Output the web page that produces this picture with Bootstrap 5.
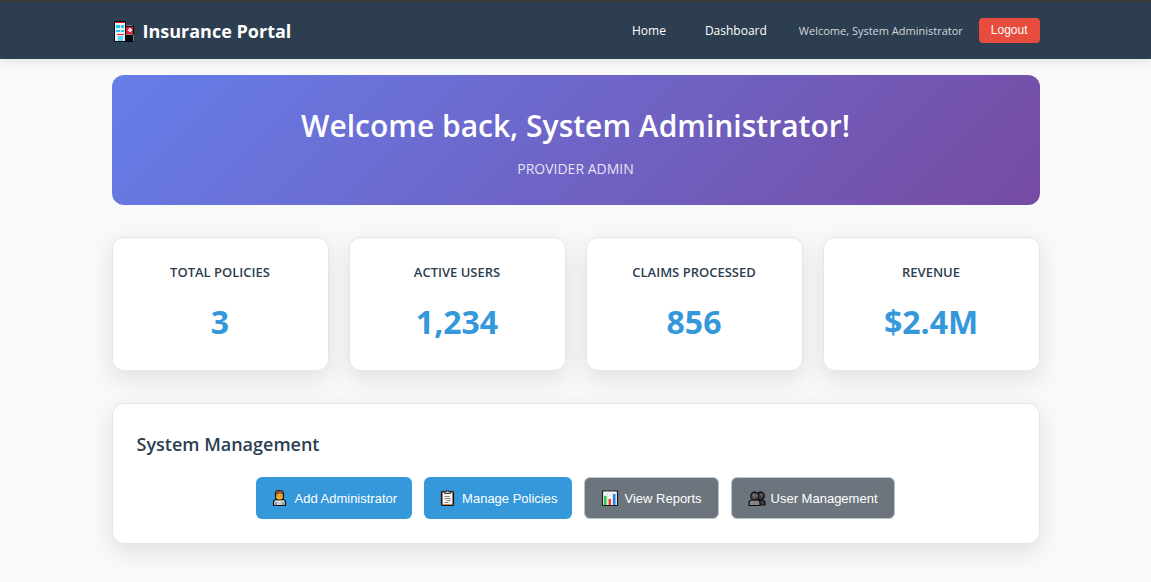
<!DOCTYPE html>
<html lang="en">
<head>
<meta charset="utf-8">
<meta name="viewport" content="width=device-width, initial-scale=1">
<title>Insurance Portal</title>
<link href="https://cdn.jsdelivr.net/npm/bootstrap@5.3.0/dist/css/bootstrap.min.css" rel="stylesheet">
<style>
  body { font-family: "Segoe UI", "Open Sans", sans-serif; background: #f8f9fb; color: #2c3e50; }
  .container { --bs-gutter-x: 2rem; }
  .topbar { background: #2c3e50; border-top: 2px solid #3c3c3c; min-height: 59px; box-shadow: 0 2px 10px rgba(0,0,0,.1); }
  .topbar .navbar-brand { font-size: 18px; line-height: 24px; font-weight: 700; gap: 7px; }
  .topbar .menu .nav-link { font-size: 12px; line-height: 20px; font-weight: 500; color: #fff; padding: 0; }
  .menu { gap: 39px; }
  .greeting { font-size: 11px; line-height: 20px; color: #d5d8dc; }
  .btn { font-family: Arial, "Liberation Sans", sans-serif; font-weight: 500; }
  .btn-logout { --bs-btn-color: #fff; --bs-btn-bg: #e74c3c; --bs-btn-hover-bg: #c0392b; --bs-btn-hover-color: #fff; --bs-btn-border-width: 0; font-size: 12px; line-height: 15px; padding: 5px 12px; border-radius: 4px; }
  .hero { background: linear-gradient(135deg, #667eea 0%, #764ba2 100%); border-radius: 12px; padding: 31px 24px 24px; margin-top: 16px; min-height: 130px; }
  .hero h1 { font-size: 30px; line-height: 40px; font-weight: 600; margin-bottom: 12px; }
  .hero p { font-size: 14px; line-height: 22px; color: rgba(255,255,255,.85); }
  .panel { background: #fff; border: 1px solid #e1e8ed; border-radius: 12px; box-shadow: 0 8px 24px rgba(0,0,0,.1); }
  .stats { --bs-gutter-x: 20px; --bs-gutter-y: 20px; padding-top: 32px; }
  .stat { padding: 24px; min-height: 134px; }
  .stat h2 { font-size: 13px; line-height: 20px; font-weight: 600; margin-bottom: 20px; }
  .stat p { font-size: 32px; line-height: 40px; font-weight: 700; color: #3498db; }
  .manage { margin: 32px 0 38px; padding: 24px; }
  .manage h2 { font-size: 18px; line-height: 32px; font-weight: 600; margin-bottom: 17px; }
  .actions { gap: 12px; }
  .btn-act { display: inline-flex; align-items: center; gap: 5px; font-size: 13px; line-height: 17px; padding: 12px 15px; border-radius: 6px; border: 0; color: #fff; --bs-btn-hover-color: #fff; }
  .btn-blue { --bs-btn-bg: #3498db; --bs-btn-hover-bg: #2980b9; }
  .btn-gray { --bs-btn-bg: #6c757d; --bs-btn-hover-bg: #5c636a; border: 1px solid #bdc3c7; padding: 11px 16px; }
</style>
</head>
<body>
<nav class="navbar navbar-expand navbar-dark topbar py-0">
  <div class="container">
    <a class="navbar-brand d-flex align-items-center p-0 m-0" href="#">
      <svg width="24" height="24" viewBox="0 0 24 24" aria-hidden="true">
        <path d="M2 2h12v4h8v17H2z" fill="#080c10"/>
        <path d="M3 4h10v18H3z" fill="#e6eef2"/>
        <path d="M3 3h10v1H3zM5 15h7v1H5z" fill="#ee1c25"/>
        <path d="M4 6h4v3H4zM9 6h3v3H9zM4 11h4v2H4zM9 11h3v2H9z" fill="#27c4ed"/>
        <path d="M6 17h5v5H6z" fill="#5bd5f5"/>
        <path d="M14 6h7v1h-7z" fill="#686e74"/>
        <path d="M14 8h7v7h-7z" fill="#dc2438"/>
        <path d="M17 9h2v1h1v2h-1v1h-2v-1h-1v-2h1z" fill="#ffd9de"/>
        <path d="M14 15h7v1h-7zM21 16h1v6h-1z" fill="#7d8185"/>
      </svg>
      Insurance Portal
    </a>
    <div class="d-flex align-items-center">
      <div class="navbar-nav menu">
        <a class="nav-link" href="#">Home</a>
        <a class="nav-link" href="#">Dashboard</a>
      </div>
      <span class="greeting ms-4 ps-2">Welcome, System Administrator</span>
      <button type="button" class="btn btn-logout ms-3">Logout</button>
    </div>
  </div>
</nav>

<main class="container">
  <section class="hero text-center text-white">
    <h1>Welcome back, System Administrator!</h1>
    <p class="mb-0">PROVIDER ADMIN</p>
  </section>

  <section class="row row-cols-2 row-cols-md-4 stats text-center">
    <div class="col"><div class="panel stat"><h2>TOTAL POLICIES</h2><p class="mb-0">3</p></div></div>
    <div class="col"><div class="panel stat"><h2>ACTIVE USERS</h2><p class="mb-0">1,234</p></div></div>
    <div class="col"><div class="panel stat"><h2>CLAIMS PROCESSED</h2><p class="mb-0">856</p></div></div>
    <div class="col"><div class="panel stat"><h2>REVENUE</h2><p class="mb-0">$2.4M</p></div></div>
  </section>

  <section class="panel manage">
    <h2>System Management</h2>
    <div class="actions d-flex flex-wrap justify-content-center">
      <button type="button" class="btn btn-act btn-blue">
        <svg width="18" height="18" viewBox="0 0 18 18" aria-hidden="true">
          <path d="M2.5 16.5v-3q0-3 3-3h6q3 0 3 3v3z" fill="#c9ced2" stroke="#111" stroke-width="1.2"/>
          <path d="M6.5 10.5h4l-2 3z" fill="#fff"/>
          <path d="M5 13.5v3M12 13.5v3" stroke="#555"/>
          <rect x="4.500" y="1.500" width="8" height="9.500" rx="3.500" fill="#fdb72e" stroke="#111" stroke-width="1.200"/>
          <path d="M5 6V4q1-2.500 4-2.500T12 5v1l-3-1.500z" fill="#8e562e"/>
          <path d="M6.500 7h1M9.500 7h1" stroke="#5b3b12"/>
        </svg>
        Add Administrator
      </button>
      <button type="button" class="btn btn-act btn-blue">
        <svg width="18" height="18" viewBox="0 0 18 18" aria-hidden="true">
          <rect x="2.500" y="2.500" width="12" height="14" rx="1" fill="#c5884e" stroke="#151515" stroke-width="1.200"/>
          <path d="M4 4h9v11H4z" fill="#f3f5f6"/>
          <path d="M5.500 4.500v-2h2v-1h2v1h2v2z" fill="#aeb4b8" stroke="#222" stroke-width=".8"/>
          <path d="M5.500 7.500h5M5.500 9.500h6M7.500 11.500h4M5.500 13.500h4" stroke="#7c8388"/>
        </svg>
        Manage Policies
      </button>
      <button type="button" class="btn btn-act btn-gray">
        <svg width="18" height="18" viewBox="0 0 18 18" aria-hidden="true">
          <path d="M1.500 2h15v14.500h-15z" fill="#f4f5f6" stroke="#1a1d20" stroke-width="1.200"/>
          <path d="M2 6h14M2 11h14M6.500 2v14M11.500 2v14" stroke="#d5d9dc" stroke-width=".6"/>
          <path d="M3 7h2.500v9H3z" fill="#2dc643"/>
          <path d="M7.500 10H10v6H7.500z" fill="#ef3b2d"/>
          <path d="M12 5h2.500v11H12z" fill="#1888e0"/>
        </svg>
        View Reports
      </button>
      <button type="button" class="btn btn-act btn-gray">
        <svg width="18" height="18" viewBox="0 0 18 18" aria-hidden="true">
          <g stroke="#0c0c0c" stroke-width="1.200">
            <path d="M7 16v-2q0-3 3-3h4q3 0 3 3v2z" fill="#3c3c3c"/>
            <circle cx="12.500" cy="7" r="3.800" fill="#383838"/>
            <path d="M1 16.500V14q0-3 3-3h5q3 0 3 3v2.500z" fill="#858585"/>
            <circle cx="6.500" cy="7" r="3.800" fill="#555"/>
          </g>
          <path d="M4.500 6h2v2M8 6h1.500v2M12 5.500h2v2.500" fill="none" stroke="#888" stroke-width=".8"/>
        </svg>
        User Management
      </button>
    </div>
  </section>
</main>
<script src="https://cdn.jsdelivr.net/npm/bootstrap@5.3.0/dist/js/bootstrap.bundle.min.js"></script>
</body>
</html>
